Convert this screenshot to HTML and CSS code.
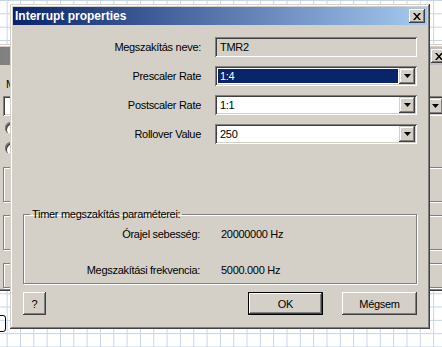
FILE: index.html
```html
<!DOCTYPE html>
<html lang="hu">

<head>
    <meta charset="UTF-8">
    <title>Interrupt properties</title>
    <link rel="stylesheet" href="styles.css">
</head>

<body>

    <div class="bgwin">
        <div class="bgwin-title">
            <span class="btn-close bg-close">
                <svg width="8" height="7" viewBox="0 0 8 7"><path d="M0 0h2l2 2.5 2-2.5h2l-3 3.5 3 3.5h-2l-2-2.5-2 2.5h-2l3-3.5z" fill="#000"/></svg>
            </span>
        </div>
        <div class="bgwin-body">
            <div class="bg-label">Megszakítás</div>
            <div class="bg-combo">
                <span class="drop">
                    <svg width="7" height="4" viewBox="0 0 7 4"><path d="M0 0h7l-3.5 4z" fill="#000"/></svg>
                </span>
            </div>
            <div class="bg-radio"></div>
            <div class="bg-radio"></div>
            <div class="bg-panel tall"></div>
            <div class="bg-panel tall"></div>
            <div class="bg-panel"></div>
        </div>
    </div>

    <div class="shape"></div>

    <div class="dialog">
        <div class="titlebar">
            <span>Interrupt properties</span>
            <span class="btn-close">
                <svg width="8" height="7" viewBox="0 0 8 7"><path d="M0 0h2l2 2.5 2-2.5h2l-3 3.5 3 3.5h-2l-2-2.5-2 2.5h-2l3-3.5z" fill="#000"/></svg>
            </span>
        </div>

        <div class="form">
            <label>Megszakítás neve:</label>
            <div class="field">TMR2</div>

            <label>Prescaler Rate</label>
            <div class="combo">
                <span class="value selected">1:4</span>
                <span class="drop">
                    <svg width="7" height="4" viewBox="0 0 7 4"><path d="M0 0h7l-3.5 4z" fill="#000"/></svg>
                </span>
            </div>

            <label>Postscaler Rate</label>
            <div class="combo">
                <span class="value">1:1</span>
                <span class="drop">
                    <svg width="7" height="4" viewBox="0 0 7 4"><path d="M0 0h7l-3.5 4z" fill="#000"/></svg>
                </span>
            </div>

            <label>Rollover Value</label>
            <div class="combo">
                <span class="value">250</span>
                <span class="drop">
                    <svg width="7" height="4" viewBox="0 0 7 4"><path d="M0 0h7l-3.5 4z" fill="#000"/></svg>
                </span>
            </div>
        </div>

        <fieldset class="group">
            <legend>Timer megszakítás paraméterei:</legend>
            <div class="group-grid">
                <span class="glabel">Órajel sebesség:</span>
                <span>20000000 Hz</span>
                <span class="glabel">Megszakítási frekvencia:</span>
                <span>5000.000 Hz</span>
            </div>
        </fieldset>

        <div class="buttons">
            <button type="button" class="btn help">?</button>
            <button type="button" class="btn default">OK</button>
            <button type="button" class="btn">Mégsem</button>
        </div>
    </div>

</body>

</html>
```

FILE: styles.css
```css
html,
body {
    margin: 0;
    padding: 0;
    width: 442px;
    height: 347px;
    overflow: hidden;
}

body {
    position: relative;
    font-family: "Liberation Sans", Arial, sans-serif;
    font-size: 11px;
    letter-spacing: -0.3px;
    color: #000;
    background-color: #fff;
    background-image:
        linear-gradient(#c6d3ea 1px, transparent 1px),
        linear-gradient(90deg, #c6d3ea 1px, transparent 1px);
    background-size: 13.33px 13.33px;
    background-position: 6.67px 0;
}

/* window behind the dialog */
.bgwin {
    position: absolute;
    left: -4px;
    top: 44px;
    width: 456px;
    height: 247px;
    box-sizing: border-box;
    padding: 3px;
    background: #d4d0c8;
    box-shadow: inset -1px -1px #404040, inset 1px 1px #d4d0c8,
        inset -2px -2px #808080, inset 2px 2px #fff;
}

.bgwin-title {
    height: 18px;
    background: linear-gradient(to right, #808080, #c0c0c0);
    display: flex;
    justify-content: flex-end;
    align-items: center;
    padding-right: 2px;
}

.bgwin-body {
    padding: 0 4px 0 4px;
    display: flex;
    flex-direction: column;
}

.bg-label {
    margin-top: 13px;
    line-height: 13px;
    padding-left: 3px;
}

.bg-combo {
    margin-top: 5px;
    height: 20px;
    box-sizing: border-box;
    padding: 2px;
    display: flex;
    justify-content: flex-end;
    background: #fff;
    box-shadow: inset 1px 1px #808080, inset -1px -1px #fff,
        inset 2px 2px #404040, inset -2px -2px #d4d0c8;
}

.bg-radio {
    margin-top: 6px;
    margin-left: 2px;
    width: 12px;
    height: 12px;
    border-radius: 50%;
    background: #fff;
    box-shadow: inset 1px 1px #808080, inset 2px 2px #404040;
}

.bg-radio + .bg-radio {
    margin-top: 8px;
}

.bg-panel {
    margin-top: 13px;
    height: 23px;
    border: 1px solid #808080;
    box-shadow: inset 1px 1px #fff, 1px 1px #fff;
}

.bg-panel.tall {
    height: 33px;
}

.shape {
    position: absolute;
    left: -6px;
    top: 315px;
    width: 10px;
    height: 15px;
    border: 1px solid #000;
    border-radius: 3px;
}

/* dialog */
.dialog {
    position: absolute;
    left: 10px;
    top: 4px;
    width: 420px;
    height: 325px;
    box-sizing: border-box;
    padding: 3px;
    display: flex;
    flex-direction: column;
    background: #d4d0c8;
    box-shadow: inset -1px -1px #404040, inset 1px 1px #d4d0c8,
        inset -2px -2px #808080, inset 2px 2px #fff;
}

.titlebar {
    height: 18px;
    display: flex;
    align-items: center;
    justify-content: space-between;
    padding: 0 2px 0 2px;
    background: linear-gradient(to right, #0a246a, #a6caf0);
    color: #fff;
    font-size: 12px;
    font-weight: bold;
    letter-spacing: 0;
}

.btn-close {
    width: 16px;
    height: 14px;
    display: flex;
    align-items: center;
    justify-content: center;
    background: #d4d0c8;
    box-shadow: inset -1px -1px #404040, inset 1px 1px #fff,
        inset -2px -2px #808080;
}

.form {
    display: grid;
    grid-template-columns: 188px 202px;
    grid-auto-rows: 20px;
    column-gap: 14px;
    row-gap: 9px;
    align-items: center;
    padding-top: 12px;
}

.form label {
    text-align: right;
}

.field,
.combo {
    height: 20px;
    box-sizing: border-box;
    padding: 2px;
    display: flex;
    align-items: center;
    box-shadow: inset 1px 1px #808080, inset -1px -1px #fff,
        inset 2px 2px #404040, inset -2px -2px #d4d0c8;
}

.field {
    padding-left: 5px;
}

.combo {
    background: #fff;
}

.combo .value {
    flex: 1;
    align-self: stretch;
    margin: 1px;
    padding-left: 2px;
    line-height: 14px;
}

.combo .value.selected {
    background: #0a246a;
    color: #fff;
}

.drop {
    width: 16px;
    height: 16px;
    display: flex;
    align-items: center;
    justify-content: center;
    background: #d4d0c8;
    box-shadow: inset -1px -1px #404040, inset 1px 1px #d4d0c8,
        inset -2px -2px #808080, inset 2px 2px #fff;
}

.group {
    margin: 64px 10px 0 10px;
    padding: 7px 0 6px 0;
    border: 1px solid #808080;
    box-shadow: inset 1px 1px #fff, 1px 1px #fff;
}

.group legend {
    margin-left: 6px;
    padding: 0 2px;
    line-height: 13px;
}

.group-grid {
    display: grid;
    grid-template-columns: 176px auto;
    column-gap: 21px;
    row-gap: 23px;
    line-height: 13px;
}

.glabel {
    text-align: right;
}

.buttons {
    display: flex;
    gap: 19px;
    padding: 0 10px;
    margin-top: 8px;
}

.btn {
    width: 75px;
    height: 23px;
    padding: 0;
    border: none;
    font-family: inherit;
    font-size: 11px;
    letter-spacing: -0.3px;
    color: #000;
    background: #d4d0c8;
    box-shadow: inset -1px -1px #404040, inset 1px 1px #fff,
        inset -2px -2px #808080, inset 2px 2px #d4d0c8;
}

.btn.help {
    width: 23px;
    margin-right: auto;
}

.btn.default {
    box-shadow: inset 0 0 0 1px #000, inset -2px -2px #404040,
        inset 2px 2px #fff, inset -3px -3px #808080;
}
```
